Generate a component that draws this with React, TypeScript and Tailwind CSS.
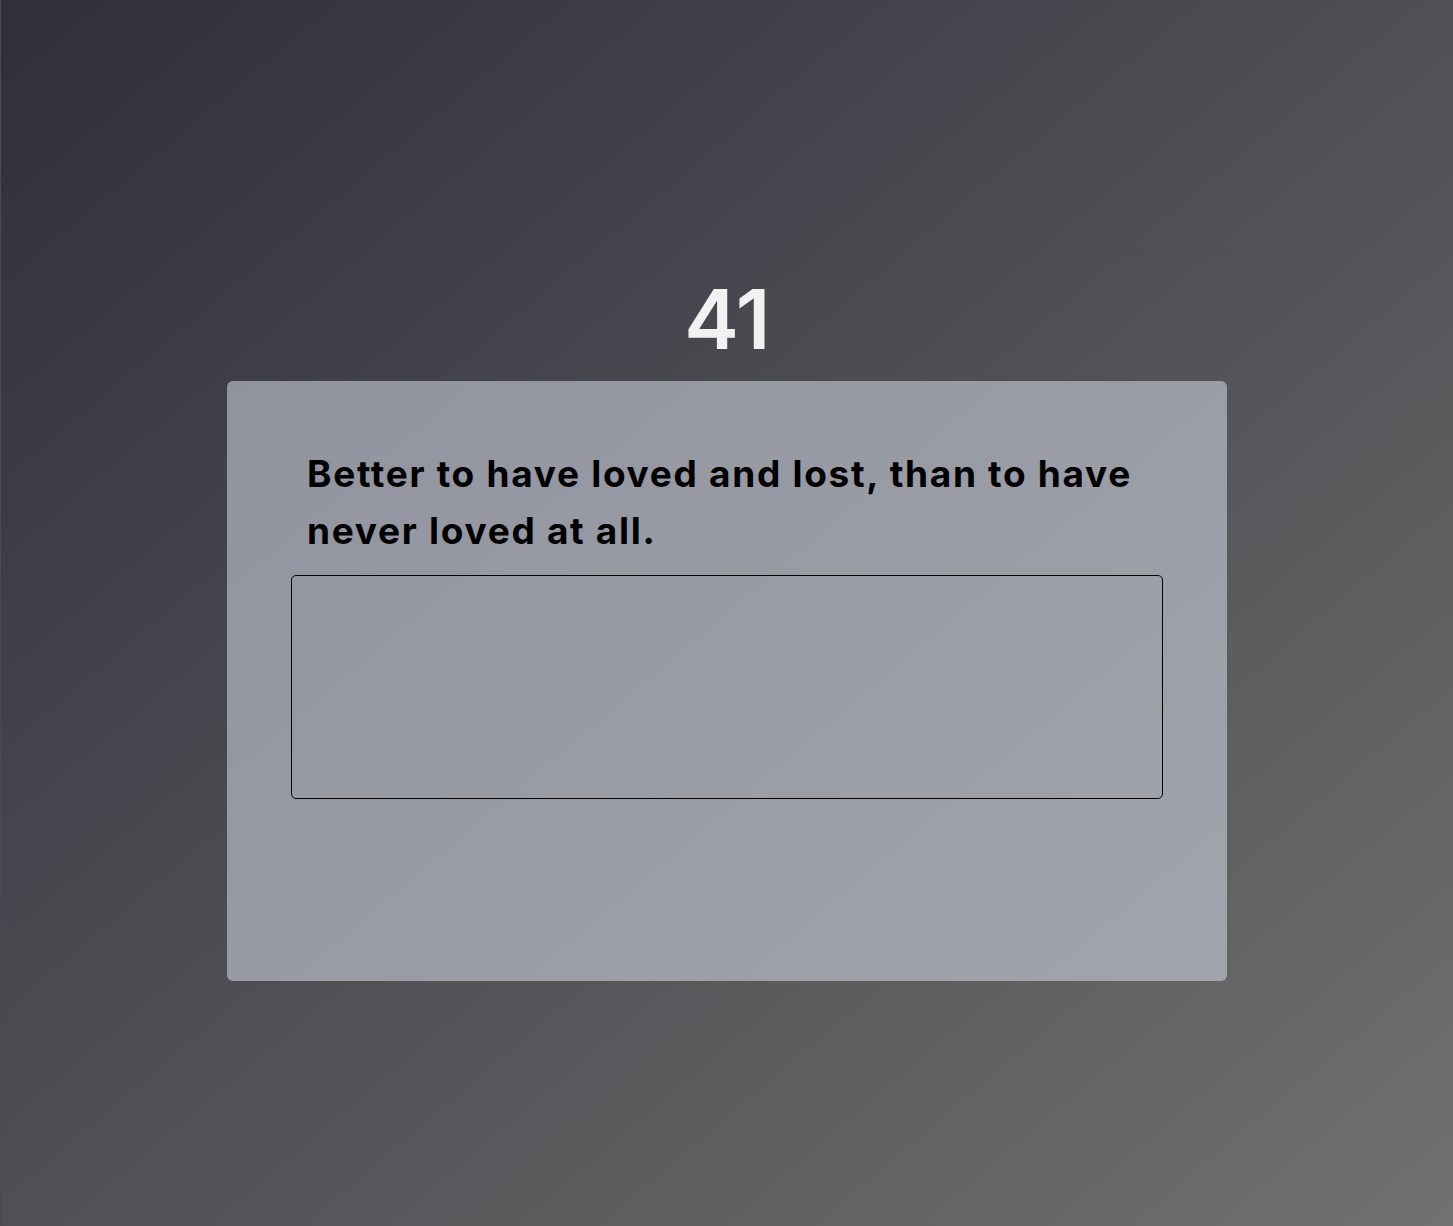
export default function App() {
  return (
    <div
      className="min-h-screen w-full flex flex-col items-center justify-center bg-linear-to-br from-[#2f2f3b] to-[#72716f] border-l border-[#4a4a54]"
      style={{ fontFamily: "Inter, 'Noto Sans', sans-serif" }}
    >
      <div className="h-[136px] flex items-center justify-center text-[82px] font-semibold text-[#f1f1f1] leading-none tracking-[-0.5px] pt-[14px]">
        41
      </div>
      <div className="w-[1000px] h-[600px] rounded-md bg-[#c9cfda]/60 px-16 pt-[64px] flex flex-col">
        <h2 className="px-4 text-[37px] leading-[57px] font-bold text-black tracking-[1.7px]">
          Better to have loved and lost, than to have never loved at all.
        </h2>
        <textarea className="mt-[16px] h-[224px] w-full rounded-[5px] border border-black bg-transparent resize-none outline-none" />
      </div>
    </div>
  );
}
